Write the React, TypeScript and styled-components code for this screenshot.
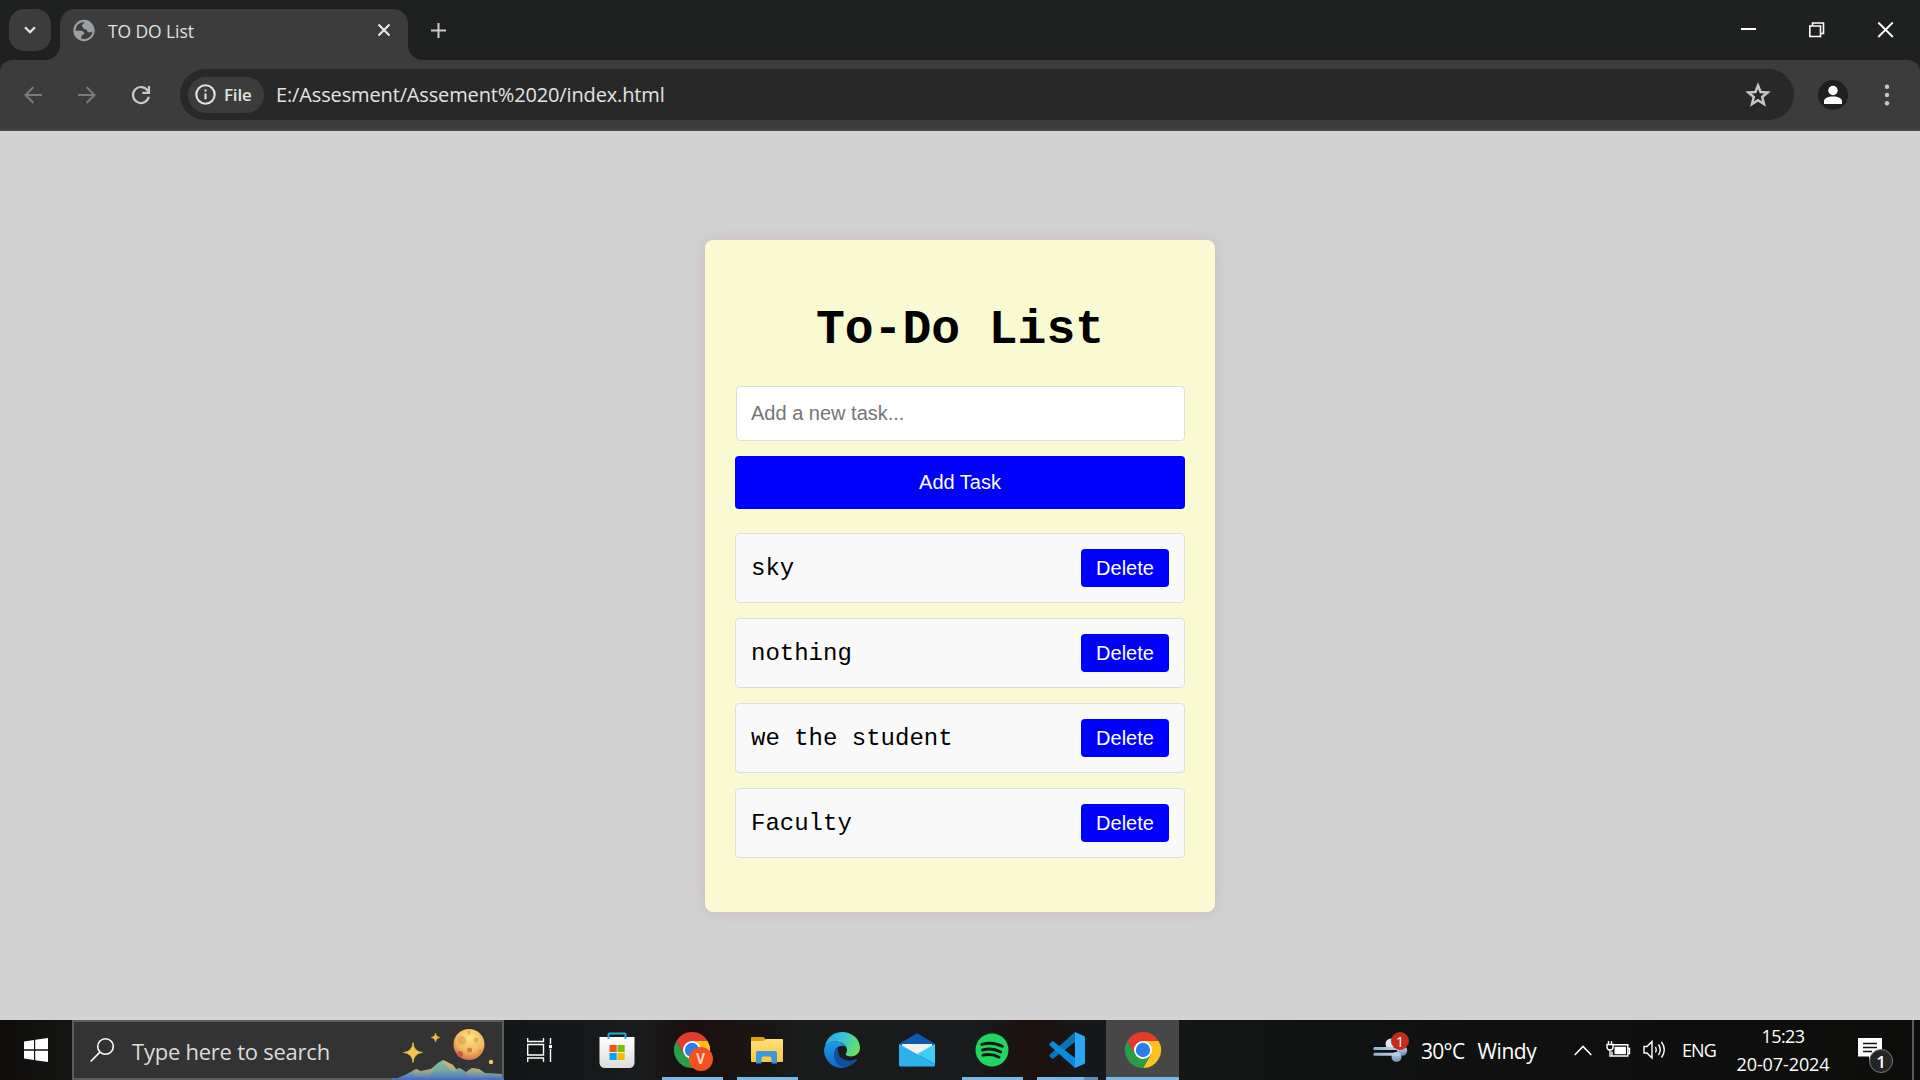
import React from 'react';
import styled, { createGlobalStyle } from 'styled-components';

const Global = createGlobalStyle`
  * { box-sizing: border-box; }
  body { margin: 0; background: #d3d3d3; overflow: hidden; }
  svg { display: block; flex: none; overflow: visible; }
`;

const ui = `'Open Sans', 'Noto Sans', sans-serif`;

const Screen = styled.div`
  width: 1920px;
  height: 1080px;
  display: flex;
  flex-direction: column;
  font-family: ${ui};
`;

/* ---------- browser window ---------- */
const TabStrip = styled.header`
  height: 60px;
  display: flex;
  align-items: flex-start;
  background: #1f2120;
`;
const TabSearch = styled.div`
  width: 42px;
  height: 42px;
  margin: 9px 9px 0;
  border-radius: 15px;
  background: #3c3c3c;
  display: flex;
  align-items: center;
  justify-content: center;
`;
const Tab = styled.div`
  position: relative;
  width: 348px;
  height: 51px;
  margin-top: 9px;
  padding: 0 17px 9px 13px;
  display: flex;
  align-items: center;
  background: #3c3c3c;
  border-radius: 15px 15px 0 0;
  &::before, &::after {
    content: '';
    position: absolute;
    bottom: 0;
    width: 15px;
    height: 15px;
  }
  &::before { left: -15px; background: radial-gradient(circle at 0 0, transparent 14.5px, #3c3c3c 15.5px); }
  &::after { right: -15px; background: radial-gradient(circle at 100% 0, transparent 14.5px, #3c3c3c 15.5px); }
`;
const TabTitle = styled.span`
  flex: 1;
  margin: 1px 0 0 13px;
  font-size: 17.5px;
  line-height: 24px;
  letter-spacing: -0.1px;
  color: #dfe1e0;
`;
const NewTab = styled.div`
  margin: 22px 0 0 21.5px;
`;
const WindowControls = styled.div`
  margin: 22px 26px 0 auto;
  display: flex;
  gap: 53px;
`;
const ToolbarFrame = styled.div`
  background: #1f2120;
`;
const Toolbar = styled.div`
  height: 71px;
  padding: 9px 0 0 24px;
  display: flex;
  background: #3c3c3c;
  border-bottom: 2px solid #484848;
  border-radius: 12px 12px 0 0;
`;
const NavButtons = styled.div`
  width: 156px;
  height: 51px;
  display: flex;
  align-items: center;
  gap: 36px;
`;
const Omnibox = styled.div`
  width: 1614px;
  height: 51px;
  padding: 0 24px 0 8px;
  display: flex;
  align-items: center;
  background: #282828;
  border-radius: 26px;
`;
const FileChip = styled.div`
  width: 76px;
  height: 36px;
  padding-left: 7px;
  display: flex;
  align-items: center;
  gap: 8px;
  border-radius: 18px;
  background: #3c3c3c;
  color: #e3e3e3;
  font-size: 17px;
  font-weight: 600;
  letter-spacing: -0.2px;
`;
const Url = styled.span`
  flex: 1;
  margin-left: 12px;
  color: #e3e3e3;
  font-size: 20px;
  letter-spacing: -0.14px;
  white-space: nowrap;
`;
const ToolbarEnd = styled.div`
  height: 51px;
  margin-left: 24px;
  display: flex;
  align-items: center;
  gap: 36px;
`;

/* ---------- page ---------- */
const Page = styled.main`
  height: 889px;
  padding-top: 109px;
  display: flex;
  justify-content: center;
  align-items: flex-start;
  background: #d3d3d3;
`;
const Card = styled.section`
  width: 510px;
  height: 672px;
  padding: 62px 30px 30px;
  border-radius: 8px;
  background: #fafad2;
  box-shadow: 0 0 15px rgba(188, 143, 143, 0.35);
  font-family: 'Liberation Mono', monospace;
`;
const Heading = styled.h1`
  margin: 0 0 28px;
  font-size: 48px;
  line-height: 56px;
  font-weight: 700;
  text-align: center;
  color: #000;
`;
const TaskInput = styled.input`
  display: block;
  width: 449px;
  height: 55px;
  margin: 0 0 15px 1px;
  padding: 0 14px;
  border: 1px solid #ddd;
  border-radius: 4px;
  background: #fff;
  font: 20px 'Liberation Sans', sans-serif;
  &::placeholder { color: #757575; }
`;
const Button = styled.button<{ $small?: boolean }>`
  width: ${p => (p.$small ? '88px' : '100%')};
  height: ${p => (p.$small ? '38px' : '53px')};
  padding: 0;
  border: 0;
  border-radius: 4px;
  background: #0000ff;
  color: #fff;
  font: 20px 'Liberation Sans', sans-serif;
`;
const TaskList = styled.ul`
  margin: 24px 0 0;
  padding: 0;
  list-style: none;
  display: flex;
  flex-direction: column;
  gap: 15px;
`;
const Task = styled.li`
  height: 70px;
  padding: 0 15px;
  display: flex;
  align-items: center;
  justify-content: space-between;
  border: 1px solid #ddd;
  border-radius: 4px;
  background: #f9f9f9;
  font-size: 24px;
  color: #000;
`;
const TaskName = styled.span`
  padding-top: 1px;
`;

/* ---------- taskbar ---------- */
const Taskbar = styled.footer`
  height: 60px;
  display: flex;
  background: linear-gradient(90deg, #0f0e0c 0, #151514 80px, #131718 520px, #191b1c 640px, #17100e 690px, #1a1413 750px, #191b1b 800px, #181a1b 980px, #1c100c 1030px, #16191a 1090px, #111212 1300px, #0d0d0c 1920px);
  color: #fff;
`;
const StartCell = styled.div`
  width: 72px;
  padding: 18px 0 0 24px;
`;
const SearchBox = styled.div`
  width: 432px;
  height: 60px;
  padding-left: 16px;
  display: flex;
  align-items: center;
  background: #333;
  border: 2px solid #5c5c5c;
`;
const SearchText = styled.span`
  flex: 1;
  margin: 2px 0 0 18px;
  font-size: 22px;
  letter-spacing: -0.24px;
  color: #dcdcdc;
  white-space: nowrap;
`;
const AppCell = styled.div<{ $active?: boolean; $open?: boolean }>`
  width: ${p => (p.$active ? 73 : 75)}px;
  height: 60px;
  margin-left: ${p => (p.$active ? 2 : 0)}px;
  display: flex;
  align-items: center;
  justify-content: center;
  background: ${p => (p.$active ? '#474747' : 'transparent')};
  border-bottom: ${p => (p.$active ? '3px solid #76b9ed' : '0')};
  padding-top: ${p => (p.$active ? '3px' : '0')};
  ${p => p.$open && `background: linear-gradient(#76b9ed, #76b9ed) 8px 57px / 61px 3px no-repeat;`}
`;
const TaskViewCell = styled(AppCell)`
  padding-right: 4px;
`;
const StackedCell = styled(AppCell)`
  background:
    linear-gradient(#5d8fb8, #5d8fb8) 55px 57px / 14px 3px no-repeat,
    linear-gradient(#76b9ed, #76b9ed) 8px 57px / 61px 3px no-repeat;
`;
const Apps = styled.div`
  display: flex;
`;
const Tray = styled.div`
  margin-left: auto;
  display: flex;
  height: 60px;
  align-items: center;
`;
const TrayText = styled.span<{ $size: number; $width: number; $track?: number }>`
  width: ${p => p.$width}px;
  font-size: ${p => p.$size}px;
  letter-spacing: ${p => p.$track ?? 0}px;
  white-space: nowrap;
`;
const Clock = styled.div`
  width: 122px;
  margin-right: 14px;
  display: flex;
  flex-direction: column;
  align-items: center;
  font-size: 18px;
  line-height: 28px;
  letter-spacing: -0.6px;
`;
const DateText = styled.span`
  letter-spacing: -0.1px;
`;
const ShowDesktop = styled.div`
  width: 8px;
  height: 60px;
  margin-left: 14px;
  border-left: 2px solid #5a5a5a;
`;
const Badged = styled.div`
  position: relative;
`;
const Badge = styled.span`
  position: absolute;
  display: flex;
  align-items: center;
  justify-content: center;
  border-radius: 50%;
  color: #fff;
`;
const ProfileBadge = styled(Badge)`
  left: 15px;
  top: 15px;
  width: 24px;
  height: 24px;
  background: #f4511e;
  font: 700 14px Roboto, sans-serif;
  color: #fbd5c8;
`;
const AlertBadge = styled(Badge)`
  left: 19px;
  top: -4px;
  width: 18px;
  height: 18px;
  background: #c42b1c;
  font-size: 14px;
`;
const CountBadge = styled(Badge)`
  left: 11px;
  top: 12px;
  width: 24px;
  height: 24px;
  background: #252525;
  border: 1px solid #7a7a7a;
  font-size: 17px;
  font-weight: 600;
`;
const Weather = styled.div`
  display: flex;
  margin: 2px 0 0 13px;
`;
const TrayIcon = styled.div`
  margin: 0 13px 0 14px;
`;
const Lang = styled.span`
  margin: 0 7px 0 15px;
  width: 33px;
  font-size: 18px;
  letter-spacing: -0.9px;
`;

const Chrome = () => (
  <svg width="36" height="36" viewBox="-18 -18 36 36">
    <path d="M-15.6 -9A18 18 0 0 1 15.6 -9L0 -9L-7.8 4.5Z" fill="#e33b2e" />
    <path d="M15.6 -9A18 18 0 0 1 0 18L7.8 4.5L0 -9Z" fill="#fcc31e" />
    <path d="M0 18A18 18 0 0 1 -15.6 -9L-7.8 4.5L7.8 4.5Z" fill="#2a9d49" />
    <circle r="9" fill="#fff" />
    <circle r="7.200" fill="#2b7de9" />
  </svg>
);

const SearchArt = () => (
  <svg width="112" height="60" viewBox="390 0 112 60">
    <defs>
      <radialGradient id="moon" cx=".55" cy=".3" r=".75">
        <stop offset="0" stopColor="#ffe488" /><stop offset=".6" stopColor="#f0b95a" /><stop offset="1" stopColor="#d0624f" />
      </radialGradient>
      <linearGradient id="hill" x1="0" y1="0" x2="0" y2="1">
        <stop offset="0" stopColor="#8fc0a0" /><stop offset=".5" stopColor="#76a8a0" /><stop offset="1" stopColor="#4a72c4" />
      </linearGradient>
      <linearGradient id="glow" x1="0" y1="0" x2="0" y2="1">
        <stop offset="0" stopColor="#e8b060" /><stop offset="1" stopColor="#e8b060" stopOpacity="0" />
      </linearGradient>
    </defs>
    <circle cx="469" cy="24.500" r="15.500" fill="url(#moon)" />
    <g fill="#cf9440" opacity=".5">
      <circle cx="462" cy="20.500" r="4" /><circle cx="476" cy="20" r="2.500" /><circle cx="469" cy="12.500" r="2" /><circle cx="480" cy="31" r="2" />
    </g>
    <circle cx="469.500" cy="30" r="2.500" fill="#d87751" /><circle cx="460" cy="34" r="3" fill="#c9584d" />
    <path d="M413 22.500Q413.800 31.700 422.500 32.500Q413.800 33.300 413 42.500Q412.200 33.300 403.500 32.500Q412.200 31.700 413 22.500Z" fill="#f4c84e" stroke="#e0ae3c" strokeWidth=".8" />
    <path d="M435.500 13Q436 17 439.800 17.500Q436 18 435.500 22Q435 18 431.200 17.500Q435 17 435.500 13Z" fill="#f4c03e" stroke="#e0ae3c" strokeWidth=".6" />
    <circle cx="491" cy="42" r="2.200" fill="#f4cf4e" />
    <path d="M392 60Q400 57 405 55L416 49L421 51L431 49L438 43L443 40L449 43L453 45L456 49L460 48L466 52L472 48L479 49L485 53L502 54V58H392Z" fill="url(#hill)" />
    <path d="M412 51L416 49L421 51L431 49L434 47L430 57H414ZM443 40L449 43L453 45L456 49L454 52L447 46ZM466 52L472 48L479 49L485 53L502 54V58H468Z" fill="url(#glow)" />
    <path d="M391 60.500L398 58H504V60.500Z" fill="#4a70c0" />
  </svg>
);

const tasks = ['sky', 'nothing', 'we the student', 'Faculty'];

export default function App() {
  return (
    <Screen>
      <Global />
      <TabStrip>
        <TabSearch>
          <svg width="12" height="8" viewBox="0 0 12 8"><path d="M1 1.200L6 6.200L11 1.200" fill="none" stroke="#e6e6e6" strokeWidth="2.300" /></svg>
        </TabSearch>
        <Tab>
          <svg width="22" height="22" viewBox="0 -.5 22 22">
            <circle cx="11" cy="11" r="9.600" fill="#3c3c3c" stroke="#9aa0a6" strokeWidth="2.100" />
            <path d="M12 1.800C11.500 4 9.200 4 9 6.300C8.800 8 10.700 7.500 10.500 9.500C12.500 9.800 14.500 10.200 14.500 12C14.500 13 16 13 18 12.700L20.500 11C20.500 6 17 2 12 1.800Z" fill="#9aa0a6" />
            <path d="M1.500 11.300L8.500 11.300C10.500 11.500 11.500 13 11.200 14.800C9.500 15 8.500 15.500 8.500 17.500L7.500 20C4 18.500 1.500 15.500 1.500 11.300Z" fill="#9aa0a6" />
          </svg>
          <TabTitle>TO DO List</TabTitle>
          <svg width="14" height="14" viewBox="0 0 14 14"><path d="M1.500 1.500L12.500 12.500M12.500 1.500L1.500 12.500" stroke="#e6e6e6" strokeWidth="2.200" /></svg>
        </Tab>
        <NewTab>
          <svg width="17" height="17" viewBox="0 0 17 17"><path d="M8.500 1V16M1 8.500H16" stroke="#c7c7c7" strokeWidth="2.100" /></svg>
        </NewTab>
        <WindowControls>
          <svg width="16" height="16" viewBox="0 0 16 16"><path d="M1 7H16" stroke="#fff" strokeWidth="2" /></svg>
          <svg width="16" height="16" viewBox="1 0 16 16"><path d="M1.800 4H12.500V14.500H1.800ZM4.500 4V1H15.500V11.500H12.500" fill="none" stroke="#fff" strokeWidth="1.600" /></svg>
          <svg width="16" height="16" viewBox="1 0 16 16"><path d="M1.300 .5L15.800 15M15.800 .5L1.300 15" stroke="#fff" strokeWidth="1.800" /></svg>
        </WindowControls>
      </TabStrip>
      <ToolbarFrame>
        <Toolbar>
          <NavButtons>
            <svg width="18" height="18" viewBox="0 0 18 18"><path d="M18 9H1.500M9.500 1L1.500 9L9.500 17" fill="none" stroke="#7b7b7b" strokeWidth="2" /></svg>
            <svg width="18" height="18" viewBox="0 0 18 18"><path d="M0 9H16.500M8.500 1L16.500 9L8.500 17" fill="none" stroke="#7b7b7b" strokeWidth="2" /></svg>
            <svg width="18" height="18" viewBox="0 0 18 18"><path d="M16.800 10.800A8 8 0 1 1 15.600 4.500L17 6.200M17 0V6.800H10.300" fill="none" stroke="#c7c7c7" strokeWidth="2.200" /></svg>
          </NavButtons>
          <Omnibox>
            <FileChip>
              <svg width="21" height="21" viewBox="0 0 21 21"><circle cx="10.500" cy="10.500" r="9.200" fill="none" stroke="#e3e3e3" strokeWidth="2.100" /><path d="M10.500 9.500V15.300M10.500 5.500V7.600" stroke="#e3e3e3" strokeWidth="2.100" /></svg>
              File
            </FileChip>
            <Url>E:/Assesment/Assement%2020/index.html</Url>
            <svg width="24" height="24" viewBox="0 0 24 24"><path d="M12 2.500L14.600 9L21.600 9.500L16.200 14L18 21L12 17.200L6 21L7.800 14L2.400 9.500L9.400 9Z" fill="none" stroke="#c7c7c7" strokeWidth="2.500" /></svg>
          </Omnibox>
          <ToolbarEnd>
            <svg width="30" height="30" viewBox="0 0 30 30"><circle cx="15" cy="15" r="15" fill="#1f2120" /><circle cx="15" cy="10.500" r="4.700" fill="#fff" /><path d="M6 24V21.500C6 18 10 16.500 15 16.500S24 18 24 21.500V24Z" fill="#fff" /></svg>
            <svg width="6" height="22" viewBox="0 0 6 22"><g fill="#c7c7c7"><circle cx="3" cy="2.700" r="2.200" /><circle cx="3" cy="11" r="2.200" /><circle cx="3" cy="19.300" r="2.200" /></g></svg>
          </ToolbarEnd>
        </Toolbar>
      </ToolbarFrame>

      <Page>
        <Card>
          <Heading>To-Do List</Heading>
          <TaskInput placeholder="Add a new task..." />
          <Button>Add Task</Button>
          <TaskList>
            {tasks.map(t => (
              <Task key={t}>
                <TaskName>{t}</TaskName>
                <Button $small>Delete</Button>
              </Task>
            ))}
          </TaskList>
        </Card>
      </Page>

      <Taskbar>
        <StartCell>
          <svg width="24" height="24" viewBox="0 0 24 24"><path d="M0 3.400L10 2V11.300H0ZM11.200 1.800L24 0V11.300H11.200ZM0 12.700H10V22L0 20.600ZM11.200 12.700H24V24L11.200 22.200Z" fill="#fff" /></svg>
        </StartCell>
        <SearchBox>
          <svg width="24" height="24" viewBox="0 0 24 24"><circle cx="15.500" cy="8.500" r="7.800" fill="none" stroke="#fff" strokeWidth="1.600" /><path d="M10 14.200L.6 23.500" stroke="#fff" strokeWidth="1.700" /></svg>
          <SearchText>Type here to search</SearchText>
          <SearchArt />
        </SearchBox>
        <Apps>
          <TaskViewCell>
            <svg width="25" height="24" viewBox="0 0 25 24"><path d="M.7 0V3.500H16.500V0M.7 6.500H16.500V17H.7ZM.7 24V20H16.500V24M23.500 0V6M23.500 11V24" fill="none" stroke="#fff" strokeWidth="1.400" /><path d="M22 7H25V10.200H22Z" fill="#fff" /></svg>
          </TaskViewCell>
          <AppCell>
            <svg width="36" height="36" viewBox="0 0 36 36">
              <defs><linearGradient id="bag" x1="0" y1="0" x2="0" y2="1"><stop offset="0" stopColor="#fff" /><stop offset="1" stopColor="#dcdcdc" /></linearGradient></defs>
              <path d="M.5 5H35.500V31Q35 36 30 36H6Q1 36 .5 31Z" fill="url(#bag)" />
              <path d="M9.500 7V2.500Q9.500 1.500 10.500 1.500H25.500Q26.500 1.500 26.500 2.500V7" fill="none" stroke="#27a9dc" strokeWidth="2" />
              <path d="M10.500 13H17.700V20H10.500Z" fill="#f1511b" /><path d="M18.500 13H25.700V20H18.500Z" fill="#80bb01" /><path d="M10.500 21H17.700V28H10.500Z" fill="#00a4ef" /><path d="M18.500 21H25.700V28H18.500Z" fill="#fbb900" />
            </svg>
          </AppCell>
          <AppCell $open>
            <Badged>
              <Chrome />
              <ProfileBadge>V</ProfileBadge>
            </Badged>
          </AppCell>
          <AppCell $open>
            <svg width="32" height="28" viewBox="0 0 32 28">
              <defs><linearGradient id="fold" x1="0" y1="0" x2="0" y2="1"><stop offset="0" stopColor="#ffe07c" /><stop offset="1" stopColor="#f8c740" /></linearGradient></defs>
              <path d="M0 2Q0 1 1 1H12Q13.500 1 14 2.500L15 5H0Z" fill="#e0a008" />
              <path d="M0 5H12L15 3H31Q32 3 32 4V25Q32 26 31 26H1Q0 26 0 25Z" fill="url(#fold)" />
              <path d="M5 27.500V17Q5 15 7 15H24Q26 15 26 17V27.500H20.500V22Q20.500 20.500 19 20.500H12Q10.500 20.500 10.500 22V27.500Z" fill="#3b96dd" />
            </svg>
          </AppCell>
          <AppCell>
            <svg width="36" height="36" viewBox="0 0 36 36">
              <defs>
                <linearGradient id="e1" x1="0" y1=".2" x2="1" y2=".5"><stop offset="0" stopColor="#2aa7e0" /><stop offset=".5" stopColor="#36c5d8" /><stop offset="1" stopColor="#6be25a" /></linearGradient>
                <linearGradient id="e2" x1="0" y1="0" x2="0" y2="1"><stop offset="0" stopColor="#1d9ee2" /><stop offset="1" stopColor="#0b68cc" /></linearGradient>
              </defs>
              <path d="M1 14C3 5 10 0 18 0C28 0 36 7 36 15.500C36 21 32 24.500 27 24.500C24 24.500 21.500 23.500 21.500 22.300C21.500 21.500 23 20.800 23 18C23 13 18 9.500 12 9.500C7 9.500 3 11.500 1 14Z" fill="url(#e1)" />
              <path d="M0 18C0 13 5 9.500 11.500 9.500C18 9.500 22 13 22.800 16C22 14.500 20.500 13.700 18.500 13.700C14 13.700 10.500 17 10.500 22C10.500 29 16 35 22 35.300C20.500 35.800 19.500 36 18 36C8 36 0 28 0 18Z" fill="url(#e2)" />
              <path d="M13.500 16C11 18 10 20 10 23C10 30 16 36 22 35.300C27 34 31 31 33 28C33.500 27 33 26.500 32 27C30 28 28 28.500 25 28.500C19 28.500 14 24.500 14 19C14 18 14 17 13.500 16Z" fill="#114f9e" />
            </svg>
          </AppCell>
          <AppCell>
            <svg width="36" height="34" viewBox="0 0 36 34">
              <path d="M0 11L17 .7Q18 0 19 .7L36 11V14H0Z" fill="#0f5caf" />
              <path d="M3 11H33V16L18 24L3 16Z" fill="#f3f1f1" />
              <path d="M0 11L36 31V32Q36 33.500 34.500 33.500H1.500Q0 33.500 0 32Z" fill="#2db0ee" />
              <path d="M36 11V31L18 21Z" fill="#3bd0fa" />
            </svg>
          </AppCell>
          <AppCell $open>
            <svg width="34" height="34" viewBox="0 0 34 34"><circle cx="17" cy="17" r="16.500" fill="#1ed760" /><path d="M6.700 11.500C13.500 9.500 21.500 10.200 27.500 13.600M7.500 17C13.500 15.300 20.500 16 25.700 19M8 22.200C13.500 21 19.500 21.500 24 24.200" fill="none" stroke="#151716" strokeWidth="2.900" strokeLinecap="round" /></svg>
          </AppCell>
          <StackedCell>
            <svg width="36" height="36" viewBox="0 0 36 36">
              <path d="M26 0V10L4.500 26.500Q3.500 27.200 2.500 26.300L.7 24.500Q-.3 23.500 .8 22.500Z" fill="#0873b9" />
              <path d="M26 36V26L4.500 9.500Q3.500 8.800 2.500 9.700L.7 11.500Q-.3 12.500 .8 13.500Z" fill="#0b8ad8" />
              <path d="M26 0L35 4Q36 4.500 36 5.500V30.500Q36 31.500 35 32L26 36Z" fill="#2aa7f3" />
            </svg>
          </StackedCell>
          <AppCell $active><Chrome /></AppCell>
        </Apps>

        <Tray>
          <Badged>
            <svg width="36" height="28" viewBox="0 0 36 28">
              <defs>
                <linearGradient id="bar" x1="0" y1="0" x2="1" y2="0"><stop offset="0" stopColor="#8fb0d0" /><stop offset="1" stopColor="#bcd3e8" /></linearGradient>
                <linearGradient id="puff" x1="0" y1="0" x2="0" y2="1"><stop offset="0" stopColor="#c3d6e8" /><stop offset="1" stopColor="#6b92b8" /></linearGradient>
              </defs>
              <circle cx="19" cy="8" r="5.500" fill="#dfe8f1" />
              <circle cx="30" cy="14.500" r="5.200" fill="url(#puff)" />
              <circle cx="24.500" cy="21" r="5" fill="url(#puff)" />
              <path d="M2 11H26V14H2Q.5 12.500 2 11ZM2 16.700H27V19.700H2Q.5 18.200 2 16.700Z" fill="url(#bar)" />
              <path d="M14 14.800H24" stroke="#111" strokeWidth="1.200" />
            </svg>
            <AlertBadge>1</AlertBadge>
          </Badged>
          <Weather>
            <TrayText $size={21} $width={56.500} $track={-0.7}>30°C</TrayText>
            <TrayText $size={21} $width={96.500} $track={-0.4}>Windy</TrayText>
          </Weather>
          <svg width="18" height="11" viewBox="0 0 18 11"><path d="M.7 10L9 1.500L17.300 10" fill="none" stroke="#fff" strokeWidth="1.600" /></svg>
          <TrayIcon>
            <svg width="24" height="18" viewBox="0 0 24 18"><path d="M7.500 3.800H21.800V15H6V10.500M22 7.500H23.500V12.500H22M1 3.500H7V6Q7 9 4 9Q1 9 1 6ZM2.500 3V0M5.500 3V0M4 9V15H6" fill="none" stroke="#fff" strokeWidth="1.400" /><path d="M8.500 5.800H20V13.200H8.500Z" fill="#fff" /></svg>
          </TrayIcon>
          <svg width="24" height="20" viewBox="0 0 24 20"><path d="M1 6.500H4L9 1.500V18L4 13H1ZM12.500 7Q14 9.700 12.500 12.500M15.500 4.500Q19 9.700 15.500 15M18.500 2Q24 9.700 18.500 17.500" fill="none" stroke="#fff" strokeWidth="1.400" /></svg>
          <Lang>ENG</Lang>
          <Clock><span>15:23</span><DateText>20-07-2024</DateText></Clock>
          <Badged>
            <svg width="40" height="26" viewBox="0 0 40 26"><path d="M0 1H24V19.500H15L11 24V19.500H0Z" fill="#fff" /><path d="M5 6.500H19M5 10.500H19M5 14.500H14" stroke="#111" strokeWidth="1.400" /></svg>
            <CountBadge>1</CountBadge>
          </Badged>
          <ShowDesktop />
        </Tray>
      </Taskbar>
    </Screen>
  );
}
